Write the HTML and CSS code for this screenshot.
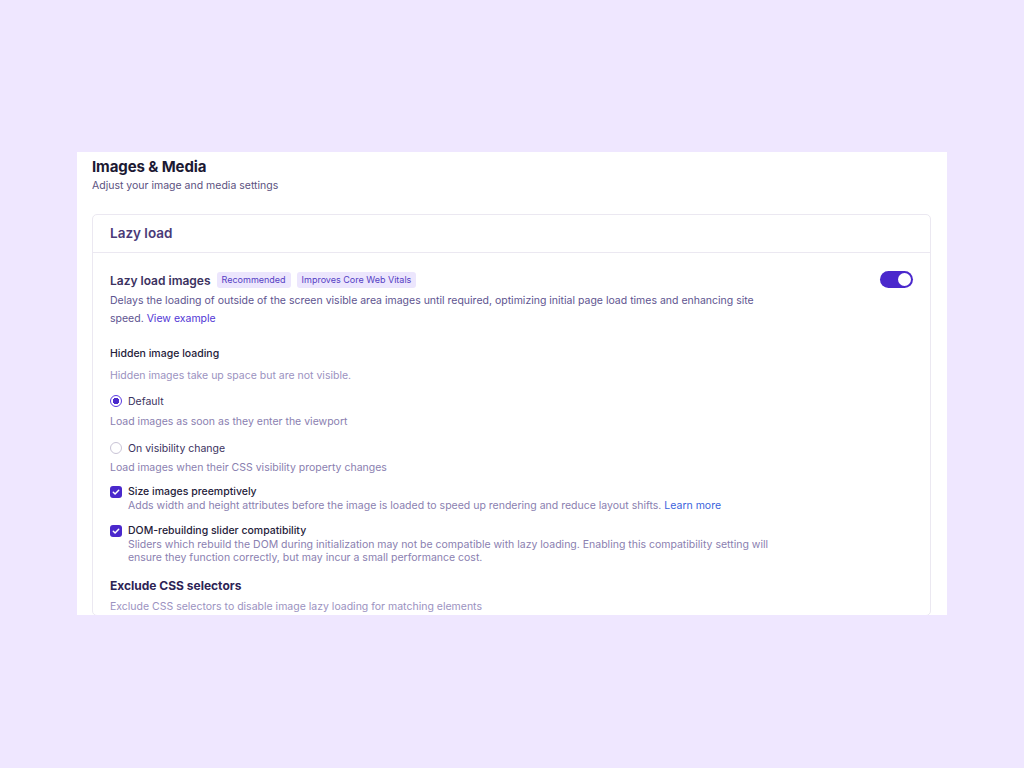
FILE: index.html
```html
<!DOCTYPE html>
<html lang="en">
<head>
<meta charset="utf-8">
<title>Images &amp; Media</title>
<link rel="stylesheet" href="styles.css">
</head>
<body>
<main class="panel">
  <header class="panel-head">
    <h1 class="panel-title">Images &amp; Media</h1>
    <p class="panel-sub">Adjust your image and media settings</p>
  </header>

  <section class="card">
    <h2 class="card-title">Lazy load</h2>
    <div class="card-body">
      <div class="setting-row">
        <div class="setting-main">
          <div class="setting-head">
            <span class="setting-name">Lazy load images</span>
            <span class="badge">Recommended</span>
            <span class="badge">Improves Core Web Vitals</span>
          </div>
          <p class="setting-desc">Delays the loading of outside of the screen visible area images until required, optimizing initial page load times and enhancing site speed. <a class="link" href="#">View example</a></p>
        </div>
        <span class="toggle on" role="switch" aria-checked="true"><span class="knob"></span></span>
      </div>

      <h3 class="group-title">Hidden image loading</h3>
      <p class="group-note">Hidden images take up space but are not visible.</p>

      <label class="radio-opt first">
        <span class="radio checked"></span>
        <span class="opt-label">Default</span>
      </label>
      <p class="opt-desc">Load images as soon as they enter the viewport</p>

      <label class="radio-opt">
        <span class="radio"></span>
        <span class="opt-label">On visibility change</span>
      </label>
      <p class="opt-desc tight">Load images when their CSS visibility property changes</p>

      <div class="check-opt first">
        <span class="check">
          <svg viewBox="0 0 12 12" width="12" height="12"><path d="M3.3 6.2l1.8 1.8 3.6-3.7" fill="none" stroke="#fff" stroke-width="1.5" stroke-linecap="round" stroke-linejoin="round"/></svg>
        </span>
        <div class="check-text">
          <span class="check-label">Size images preemptively</span>
          <p class="check-desc">Adds width and height attributes before the image is loaded to speed up rendering and reduce layout shifts. <a class="link blue" href="#">Learn more</a></p>
        </div>
      </div>

      <div class="check-opt">
        <span class="check">
          <svg viewBox="0 0 12 12" width="12" height="12"><path d="M3.3 6.2l1.8 1.8 3.6-3.7" fill="none" stroke="#fff" stroke-width="1.5" stroke-linecap="round" stroke-linejoin="round"/></svg>
        </span>
        <div class="check-text">
          <span class="check-label">DOM-rebuilding slider compatibility</span>
          <p class="check-desc narrow">Sliders which rebuild the DOM during initialization may not be compatible with lazy loading. Enabling this compatibility setting will ensure they function correctly, but may incur a small performance cost.</p>
        </div>
      </div>

      <h3 class="section-title">Exclude CSS selectors</h3>
      <p class="group-note last">Exclude CSS selectors to disable image lazy loading for matching elements</p>
    </div>
  </section>
</main>
</body>
</html>
```

FILE: styles.css
```css
* {
  box-sizing: border-box;
}

html, body {
  margin: 0;
  padding: 0;
}

body {
  background: #efe7ff;
  font-family: Inter, "Noto Sans", "Liberation Sans", sans-serif;
  color: #2a2540;
  height: 768px;
  padding-top: 152px;
}

p, h1, h2, h3 {
  margin: 0;
}

/* white settings sheet */
.panel {
  width: 870px;
  height: 463px;
  margin: 0 auto;
  background: #ffffff;
  padding: 5px 16px 0 15px;
  overflow: hidden;
}

.panel-title {
  font-size: 15px;
  line-height: 20px;
  font-weight: 700;
  color: #1c1933;
  letter-spacing: -0.1px;
}

.panel-sub {
  margin-top: 1px;
  font-size: 10.5px;
  line-height: 16px;
  color: #5b5180;
}

/* lazy load card */
.card {
  margin-top: 20px;
  border: 1px solid #ebe8f1;
  border-radius: 5px;
}

.card-title {
  height: 38px;
  line-height: 36px;
  padding: 0 17px;
  font-size: 13.5px;
  font-weight: 600;
  color: #4a3a78;
  border-bottom: 1px solid #ebe8f1;
}

.card-body {
  padding: 18px 17px 0 17px;
}

.setting-row {
  display: flex;
  justify-content: space-between;
  align-items: flex-start;
}

.setting-main {
  flex: 0 1 680px;
}

.setting-head {
  display: flex;
  align-items: center;
  height: 18px;
}

.setting-name {
  font-size: 12px;
  font-weight: 600;
  color: #3b3260;
  margin-right: 6px;
}

.badge {
  height: 16px;
  line-height: 16px;
  padding: 0 5px;
  margin-right: 6px;
  border-radius: 3px;
  background: #ece6fd;
  color: #5540c4;
  font-size: 9px;
}

.setting-desc {
  margin-top: 3px;
  font-size: 10.5px;
  line-height: 18px;
  color: #5e5490;
}

.link {
  color: #5236d6;
  text-decoration: none;
}

.link.blue {
  color: #3a63dc;
}

.toggle {
  position: relative;
  flex: none;
  width: 33px;
  height: 17px;
  border-radius: 9px;
  background: #4a28cc;
}

.toggle .knob {
  position: absolute;
  top: 2px;
  right: 2px;
  width: 13px;
  height: 13px;
  border-radius: 50%;
  background: #ffffff;
}

.group-title {
  margin-top: 18px;
  font-size: 10.5px;
  line-height: 16px;
  font-weight: 500;
  color: #25213a;
}

.group-note {
  margin-top: 6px;
  font-size: 10.5px;
  line-height: 16px;
  color: #9b92bf;
}

.group-note.last {
  margin-top: 4px;
}

/* radio options */
.radio-opt {
  display: flex;
  align-items: center;
  gap: 6px;
  height: 18px;
  margin-top: 9px;
}

.radio-opt.first {
  margin-top: 8px;
}

.radio {
  width: 12px;
  height: 12px;
  border-radius: 50%;
  border: 1px solid #c9c4d6;
  background: #fff;
  flex: none;
}

.radio.checked {
  border: 1.5px solid #5a3be0;
  background: radial-gradient(circle, #4a28cc 0 3px, #fff 3.5px);
}

.opt-label {
  font-size: 10.5px;
  color: #3b3260;
}

.opt-desc {
  margin-top: 4px;
  font-size: 10.5px;
  line-height: 16px;
  color: #8a80b0;
}

.opt-desc.tight {
  margin-top: 3px;
}

/* checkbox options */
.check-opt {
  display: flex;
  align-items: flex-start;
  gap: 6px;
  margin-top: 11px;
}

.check-opt.first {
  margin-top: 9px;
}

.check {
  flex: none;
  width: 12px;
  height: 12px;
  margin-top: 1px;
  border-radius: 3px;
  background: #4a28cc;
  display: flex;
}

.check-text {
  display: flex;
  flex-direction: column;
}

.check-label {
  font-size: 10.5px;
  line-height: 14px;
  font-weight: 500;
  color: #25213a;
}

.check-desc {
  font-size: 10.5px;
  line-height: 13.5px;
  color: #8a80b0;
}

.check-desc.narrow {
  max-width: 650px;
}

.section-title {
  margin-top: 12px;
  font-size: 12px;
  line-height: 18px;
  font-weight: 700;
  color: #2d2455;
}
```
